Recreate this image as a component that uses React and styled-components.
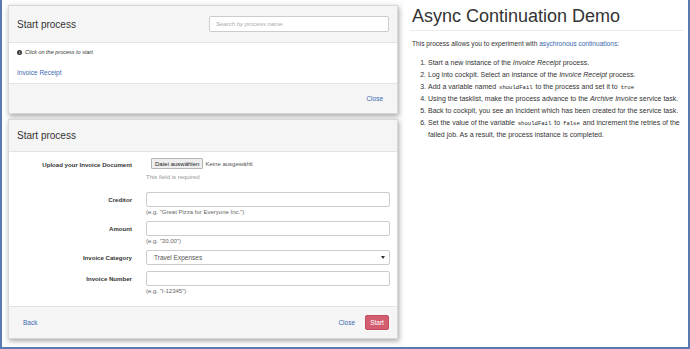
import React from 'react'
import styled, { createGlobalStyle } from 'styled-components'

const GlobalStyle = createGlobalStyle`
  html, body { margin: 0; padding: 0; background: #fff; }
  body { font-family: "Liberation Sans", Arial, sans-serif; color: #333; }
  * { box-sizing: border-box; }
`

const Frame = styled.div`
  width: 690px;
  height: 349px;
  display: flex;
  border-left: 2px solid #5a78b2;
  border-right: 2px solid #5a78b2;
  border-bottom: 2px solid #5a78b2;
  overflow: hidden;
`

const LeftCol = styled.div`
  width: 402px;
  flex-shrink: 0;
  display: flex;
  flex-direction: column;
  gap: 5px;
  padding: 5px 0 0 6px;
  background: #fdfdfd;
`

const Modal = styled.div`
  width: 390px;
  background: #fff;
  border: 1px solid #d8d8d8;
  box-shadow: 1px 2px 5px rgba(0, 0, 0, 0.35);
  display: flex;
  flex-direction: column;
`

const Header = styled.div`
  height: ${p => p.$h}px;
  background: #f5f5f5;
  border-bottom: 1px solid #e3e3e3;
  display: flex;
  align-items: center;
  justify-content: space-between;
  padding: 0 8px;
`

const Title = styled.div`
  font-size: 10px;
  color: #333;
`

const Search = styled.input`
  width: 180px;
  height: 16px;
  border: 1px solid #ccc;
  border-radius: 2px;
  font-family: inherit;
  font-size: 6px;
  font-style: italic;
  padding: 0 6px;
  background: #fff;
  &::placeholder { color: #aaa; }
`

const Body = styled.div`
  padding: ${p => p.$pad};
  display: flex;
  flex-direction: column;
`

const Info = styled.div`
  font-size: 5.5px;
  font-style: italic;
  display: flex;
  align-items: center;
  gap: 3px;
  height: 12px;
`

const InfoIcon = styled.span`
  width: 5px;
  height: 5px;
  border-radius: 50%;
  background: #333;
  color: #fff;
  font-size: 4px;
  font-style: normal;
  font-weight: bold;
  display: inline-flex;
  align-items: center;
  justify-content: center;
`

const LinkRow = styled.div`
  height: 20px;
  margin-top: 4px;
  display: flex;
  align-items: center;
`

const Link = styled.a`
  color: #3a6ab0;
  font-size: ${p => p.$size ? `${p.$size}px` : 'inherit'};
  text-decoration: none;
  cursor: pointer;
`

const Footer = styled.div`
  height: ${p => p.$h}px;
  background: #f5f5f5;
  border-top: 1px solid #e3e3e3;
  display: flex;
  align-items: center;
  padding: 0 ${p => p.$pr || 8}px 0 14px;
  gap: 10px;
`

const Spacer = styled.div`
  flex: 1;
`

const StartButton = styled.button`
  width: 24px;
  height: 15px;
  background: #d35d6e;
  border: 1px solid #c34c5e;
  border-radius: 2px;
  color: #fff;
  font-family: inherit;
  font-size: 6.5px;
  padding: 0;
`

const Row = styled.div`
  display: grid;
  grid-template-columns: 123px 244px;
  column-gap: 14px;
  margin-top: ${p => p.$mt || 0}px;
`

const Label = styled.div`
  font-size: 6.1px;
  font-weight: bold;
  color: #333;
  text-align: right;
  padding-top: ${p => p.$pt || 4}px;
`

const Field = styled.div`
  display: flex;
  flex-direction: column;
`

const TextInput = styled.div`
  height: 15px;
  border: 1px solid #ccc;
  border-radius: 2px;
  background: #fff;
  display: flex;
  align-items: center;
  justify-content: space-between;
  padding: 0 4px 0 7px;
  font-size: 6.5px;
  color: #555;
`

const Hint = styled.div`
  font-size: 6px;
  color: ${p => p.$muted ? '#999' : '#666'};
  margin-top: ${p => p.$mt || 2}px;
`

const FileLine = styled.div`
  display: flex;
  align-items: center;
  gap: 2px;
  padding-left: 5px;
  font-size: 6px;
  color: #555;
`

const FileBtn = styled.span`
  height: 11px;
  padding: 0 3px;
  background: #efefef;
  border: 1px solid #b5b5b5;
  border-radius: 1px;
  color: #222;
  display: inline-flex;
  align-items: center;
`

const RightCol = styled.div`
  flex: 1;
  padding: 6px 4px 0 6px;
`

const H1 = styled.h1`
  margin: 0;
  font-weight: normal;
  font-size: 18px;
  color: #333;
  padding: 0 0 3px 2px;
  border-bottom: 1px solid #ececec;
`

const Para = styled.p`
  margin: 9px 0 0 2px;
  font-size: 6.6px;
  color: #333;
`

const List = styled.ol`
  margin: 10px 0 0;
  padding-left: 18px;
  font-size: 7px;
  line-height: 12px;
  color: #333;
`

const Code = styled.code`
  font-family: "Liberation Mono", "DejaVu Sans Mono", monospace;
  font-size: 5.6px;
  line-height: 1;
  margin: 0 1px;
  color: #222;
`

const Caret = () => (
  <svg width="4" height="3" viewBox="0 0 4 3">
    <path d="M0 0 L4 0 L2 3 Z" fill="#333" />
  </svg>
)

export default function App() {
  return (
    <>
      <GlobalStyle />
      <Frame>
        <LeftCol>
          <Modal>
            <Header $h={37}>
              <Title>Start process</Title>
              <Search placeholder="Search by process name." />
            </Header>
            <Body $pad="3px 8px 1px">
              <Info><InfoIcon>i</InfoIcon>Click on the process to start.</Info>
              <LinkRow>
                <Link $size={6.5}>Invoice Receipt</Link>
              </LinkRow>
            </Body>
            <Footer $h={30} $pr={14}>
              <Spacer />
              <Link $size={6.5}>Close</Link>
            </Footer>
          </Modal>
          <Modal>
            <Header $h={32}>
              <Title>Start process</Title>
            </Header>
            <Body $pad="6px 0 12px">
              <Row>
                <Label $pt={3}>Upload your Invoice Document</Label>
                <Field>
                  <FileLine><FileBtn>Datei auswählen</FileBtn>Keine ausgewählt</FileLine>
                  <Hint $muted $mt={5}>This field is required</Hint>
                </Field>
              </Row>
              <Row $mt={12}>
                <Label>Creditor</Label>
                <Field>
                  <TextInput />
                  <Hint>(e.g. "Great Pizza for Everyone Inc.")</Hint>
                </Field>
              </Row>
              <Row $mt={6}>
                <Label>Amount</Label>
                <Field>
                  <TextInput />
                  <Hint>(e.g. "30.00")</Hint>
                </Field>
              </Row>
              <Row $mt={6}>
                <Label>Invoice Category</Label>
                <Field>
                  <TextInput>Travel Expenses<Caret /></TextInput>
                </Field>
              </Row>
              <Row $mt={6}>
                <Label>Invoice Number</Label>
                <Field>
                  <TextInput />
                  <Hint>(e.g. "I-12345")</Hint>
                </Field>
              </Row>
            </Body>
            <Footer $h={32}>
              <Link $size={6.5}>Back</Link>
              <Spacer />
              <Link $size={6.5}>Close</Link>
              <StartButton>Start</StartButton>
            </Footer>
          </Modal>
        </LeftCol>
        <RightCol>
          <H1>Async Continuation Demo</H1>
          <Para>This process allows you to experiment with <Link>asychronous continuations</Link>:</Para>
          <List>
            <li>Start a new instance of the <i>Invoice Receipt</i> process.</li>
            <li>Log into cockpit. Select an instance of the <i>Invoice Receipt</i> process.</li>
            <li>Add a variable named <Code>shouldFail</Code> to the process and set it to <Code>true</Code></li>
            <li>Using the tasklist, make the process advance to the <i>Archive Invoice</i> service task.</li>
            <li>Back to cockpit, you see an Incident which has been created for the service task.</li>
            <li>Set the value of the variable <Code>shouldFail</Code> to <Code>false</Code> and increment the retries of the failed job. As a result, the process instance is completed.</li>
          </List>
        </RightCol>
      </Frame>
    </>
  )
}
